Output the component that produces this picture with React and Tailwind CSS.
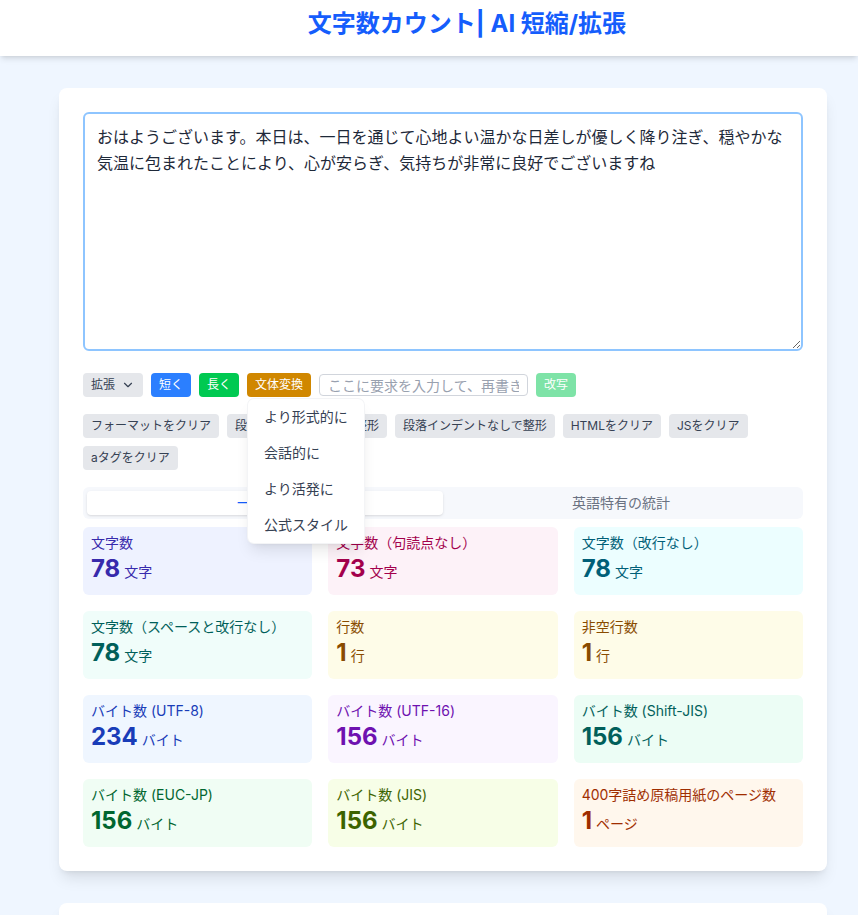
import React, { useState } from 'react';
import { ChevronDown } from 'lucide-react';

const text =
  'おはようございます。本日は、一日を通じて心地よい温かな日差しが優しく降り注ぎ、穏やかな気温に包まれたことにより、心が安らぎ、気持ちが非常に良好でございますね';

const stats = [
  { label: '文字数', value: 78, unit: '文字', box: 'bg-indigo-50', lab: 'text-indigo-800', val: 'text-indigo-800' },
  { label: '文字数（句読点なし）', value: 73, unit: '文字', box: 'bg-pink-50', lab: 'text-pink-800', val: 'text-pink-800' },
  { label: '文字数（改行なし）', value: 78, unit: '文字', box: 'bg-cyan-50', lab: 'text-cyan-800', val: 'text-cyan-800' },
  { label: '文字数（スペースと改行なし）', value: 78, unit: '文字', box: 'bg-teal-50', lab: 'text-teal-800', val: 'text-teal-800' },
  { label: '行数', value: 1, unit: '行', box: 'bg-yellow-50', lab: 'text-yellow-800', val: 'text-yellow-800' },
  { label: '非空行数', value: 1, unit: '行', box: 'bg-yellow-50', lab: 'text-yellow-800', val: 'text-yellow-800' },
  { label: 'バイト数 (UTF-8)', value: 234, unit: 'バイト', box: 'bg-blue-50', lab: 'text-blue-800', val: 'text-blue-800' },
  { label: 'バイト数 (UTF-16)', value: 156, unit: 'バイト', box: 'bg-purple-50', lab: 'text-purple-800', val: 'text-purple-800' },
  { label: 'バイト数 (Shift-JIS)', value: 156, unit: 'バイト', box: 'bg-emerald-50', lab: 'text-teal-800', val: 'text-teal-800' },
  { label: 'バイト数 (EUC-JP)', value: 156, unit: 'バイト', box: 'bg-green-50', lab: 'text-green-800', val: 'text-green-800' },
  { label: 'バイト数 (JIS)', value: 156, unit: 'バイト', box: 'bg-lime-50', lab: 'text-lime-800', val: 'text-lime-800' },
  { label: '400字詰め原稿用紙のページ数', value: 1, unit: 'ページ', box: 'bg-orange-50', lab: 'text-orange-800', val: 'text-orange-800' },
];

const tools = [
  'フォーマットをクリア',
  '段落インデントありで整形',
  '段落インデントなしで整形',
  'HTMLをクリア',
  'JSをクリア',
  'aタグをクリア',
];

const styles = ['より形式的に', '会話的に', 'より活発に', '公式スタイル'];

export default function App() {
  const [value, setValue] = useState(text);
  const [tab, setTab] = useState(0);

  return (
    <div className="min-h-screen bg-blue-50 font-['Inter','Noto_Sans_CJK_JP',sans-serif]">
      <header className="h-14 bg-white shadow-md flex items-center justify-center pl-[76px] pb-2">
        <h1 className="text-2xl font-bold text-blue-600">文字数カウント| AI 短縮/拡張</h1>
      </header>

      <main className="pt-8 pb-4">
        <div className="ml-[59px] w-[768px] bg-white rounded-lg shadow-lg p-6">
          <textarea
            value={value}
            onChange={e => setValue(e.target.value)}
            className="block w-full h-[239px] border-2 border-blue-300 rounded-md px-3 py-2.5 text-base leading-[26px] text-gray-800 outline-none resize-y"
          />

          <div className="mt-[22px] flex items-center gap-2 text-[12px]">
            <button className="h-6 px-2 rounded bg-gray-200 text-gray-700 flex items-center gap-1.5">
              拡張 <ChevronDown size={14} />
            </button>
            <button className="h-6 px-2 rounded bg-blue-500 text-white">短く</button>
            <button className="h-6 px-2 rounded bg-green-500 text-white">長く</button>
            <div className="relative">
              <button className="h-6 px-2 rounded bg-yellow-600 text-white">文体変換</button>
              <div className="absolute left-px top-[26px] z-10 w-[116px] bg-white rounded-md shadow-lg ring-1 ring-gray-100">
                {styles.map(s => (
                  <div key={s} className="h-9 px-4 flex items-center text-sm text-gray-700 whitespace-nowrap">{s}</div>
                ))}
              </div>
            </div>
            <input
              placeholder="ここに要求を入力して、再書きしてください"
              className="w-[209px] h-[22px] border border-gray-300 rounded-sm px-2 text-sm text-gray-700 placeholder-gray-400 outline-none"
            />
            <button className="h-6 px-2 rounded bg-green-500 text-white opacity-50">改写</button>
          </div>

          <div className="mt-[17px] flex flex-wrap gap-2 text-[12px]">
            {tools.map(t => (
              <button key={t} className="h-6 px-2 rounded bg-gray-200 text-gray-700">{t}</button>
            ))}
          </div>

          <div className="mt-[17px] grid grid-cols-2 p-1 rounded-md bg-[#f6f8fc] text-sm">
            {['一般統計', '英語特有の統計'].map((t, i) => (
              <button
                key={t}
                onClick={() => setTab(i)}
                className={
                  tab === i
                    ? 'h-6 rounded bg-white shadow-sm text-blue-600'
                    : 'h-6 rounded text-gray-500'
                }
              >
                {t}
              </button>
            ))}
          </div>

          <div className="mt-2 grid grid-cols-3 gap-4">
            {stats.map(s => (
              <div key={s.label} className={`${s.box} rounded-md px-2 pt-1.5 h-[68px]`}>
                <div className={`${s.lab} text-sm leading-5`}>{s.label}</div>
                <div className={`${s.val} leading-8`}>
                  <span className="text-2xl font-bold">{s.value}</span>
                  <span className="text-sm ml-1">{s.unit}</span>
                </div>
              </div>
            ))}
          </div>
        </div>

        <div className="mt-8 ml-[59px] w-[768px] h-40 bg-white rounded-lg shadow-lg" />
      </main>
    </div>
  );
}
